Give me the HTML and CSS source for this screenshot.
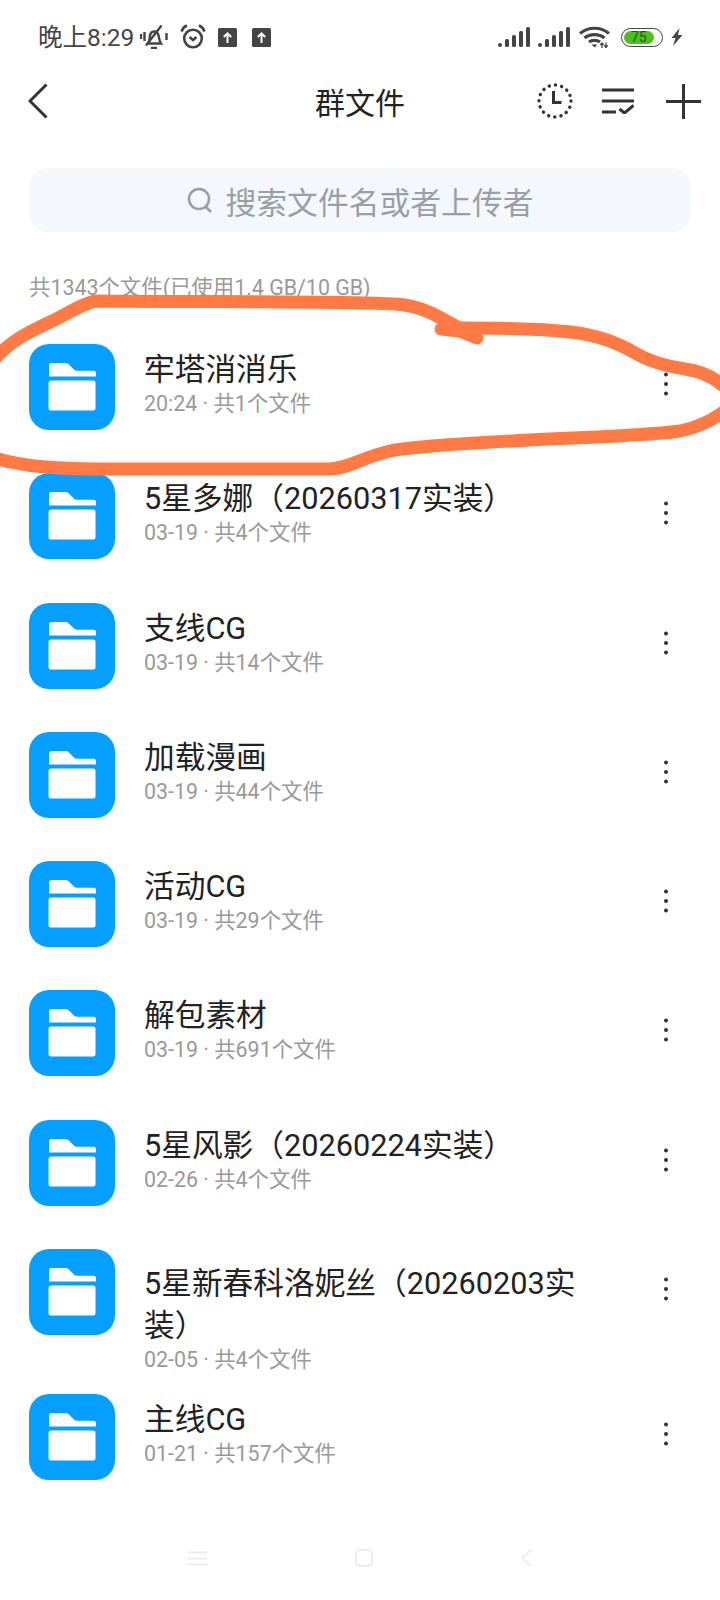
FILE: index.html
```html
<!DOCTYPE html>
<html lang="zh-CN">
<head>
<meta charset="utf-8">
<title>群文件</title>
<link rel="stylesheet" href="styles.css">
</head>
<body>
<svg class="defs" width="0" height="0" aria-hidden="true">
  <symbol id="folder" viewBox="0 0 86 86">
    <rect width="86" height="86" rx="20" fill="#05a0ff"/>
    <path d="M22 19h14.500q2 0 3.400 1.400l5 5q1.400 1.400 3.400 1.400h16.200a2.500 2.500 0 0 1 2.500 2.500v3.200h-47v-11a2.500 2.500 0 0 1 2.500-2.500z" fill="#fff"/>
    <rect x="19.500" y="36.500" width="47" height="30" rx="2.500" fill="#fff"/>
  </symbol>
  <symbol id="dots" viewBox="0 0 8 28">
    <circle cx="4" cy="4.500" r="2" fill="#333"/>
    <circle cx="4" cy="14" r="2" fill="#333"/>
    <circle cx="4" cy="23.500" r="2" fill="#333"/>
  </symbol>
  <symbol id="up" viewBox="0 0 19 19">
    <rect width="19" height="19" rx="1.500" fill="#444"/>
    <path d="M9.500 15V5.500M5.800 9l3.700-3.700L13.200 9" fill="none" stroke="#fff" stroke-width="2"/>
  </symbol>
  <symbol id="signal" viewBox="0 0 32 20">
    <rect x="0" y="16" width="4" height="4" rx="2" fill="#444"/>
    <rect x="7" y="12" width="4" height="8" rx="1.500" fill="#444"/>
    <rect x="14" y="8" width="4" height="12" rx="1.500" fill="#444"/>
    <rect x="21" y="4" width="4" height="16" rx="1.500" fill="#444"/>
    <rect x="28" y="0" width="4" height="20" rx="1.500" fill="#444"/>
  </symbol>
</svg>

<div class="page">
  <div class="status">
    <span class="time">晚上8:29</span>
    <svg class="st-bell" viewBox="0 0 28 24" fill="none" stroke="#444" stroke-width="2.400">
      <path d="M8 18.500c1.500-2 1.500-4 1.800-7 .4-3 2.200-5 4.200-5s4.200 1.800 4.800 5c.5 3 .7 5 2.200 7z"/>
      <path d="M6 20.500L21.500 .5"/>
      <path d="M11 23h6"/>
      <path d="M1 9v5M4.500 7v9M26.500 8v7"/>
    </svg>
    <svg class="st-alarm" viewBox="0 0 26 25" fill="none" stroke="#444" stroke-width="2.600">
      <circle cx="13" cy="14.500" r="8.800"/>
      <path d="M9.500 13l3.500 3 3.500-3"/>
      <path d="M1.500 7.500Q3 3 7 1.500M24.500 7.500Q23 3 19 1.500"/>
    </svg>
    <svg class="st-up"><use href="#up"/></svg>
    <svg class="st-up st-up-2"><use href="#up"/></svg>
    <span class="status-gap"></span>
    <svg class="st-signal"><use href="#signal"/></svg>
    <svg class="st-signal st-signal-2"><use href="#signal"/></svg>
    <svg class="st-wifi" viewBox="0 0 31 22" fill="none" stroke="#444" stroke-width="3.200">
      <path d="M1 7.500C9 .5 22 .5 30 7.500"/>
      <path d="M5.500 12c5.500-4.500 14.500-4.500 20 0"/>
      <path d="M10 16c3-2.300 8-2.300 11 0"/>
      <path d="M12.500 18.500l3 3 3-3z" fill="#444" stroke="none"/>
      <path d="M23 22v-5M21.300 19l1.700-2 1.700 2M27 16.500v5M25.300 19.500l1.700 2 1.700-2" stroke-width="1.300"/>
    </svg>
    <span class="battery"><span class="battery-fill"></span><span class="battery-num">75</span></span>
    <svg class="st-bolt" viewBox="0 0 12 18"><path d="M8.500 0L.5 10h4l-2.500 8 9.500-11H7z" fill="#444"/></svg>
  </div>

  <header class="bar">
    <svg class="back" viewBox="0 0 20 36" fill="none" stroke="#333" stroke-width="3"><path d="M18.500 1.500L2 18l16.500 16.500"/></svg>
    <h1 class="bar-title">群文件</h1>
    <div class="bar-actions">
      <svg class="act-clock" viewBox="0 0 36 36" fill="none" stroke="#333">
        <circle cx="18" cy="18" r="16" stroke-width="3.400" stroke-linecap="round" stroke-dasharray="0.100 6.180"/>
        <path d="M16.500 8v11.500h8" stroke-width="3"/>
      </svg>
      <svg class="act-sort" viewBox="0 0 32 26" fill="none" stroke="#333" stroke-width="3">
        <path d="M0 2h32M0 13h32M0 24h14"/>
        <path d="M17.500 21l5 4 9-7.500"/>
      </svg>
      <svg class="act-plus" viewBox="0 0 35 35" fill="none" stroke="#333" stroke-width="3"><path d="M17.500 0v35M0 17.500h35"/></svg>
    </div>
  </header>

  <div class="search">
    <svg class="search-icon" viewBox="0 0 26 26" fill="none" stroke="#9a9ea5" stroke-width="2.600"><circle cx="12" cy="12" r="10"/><path d="M18.500 19.500l5.500 5.500"/></svg>
    <span class="search-text">搜索文件名或者上传者</span>
  </div>

  <p class="summary">共1343个文件(已使用1.4 GB/10 GB)</p>

  <ul class="list">
    <li class="row"><svg class="folder"><use href="#folder"/></svg><div class="info"><div class="name">牢塔消消乐</div><div class="meta">20:24 · 共1个文件</div></div><svg class="more"><use href="#dots"/></svg></li>
    <li class="row"><svg class="folder"><use href="#folder"/></svg><div class="info"><div class="name">5星多娜（20260317实装）</div><div class="meta">03-19 · 共4个文件</div></div><svg class="more"><use href="#dots"/></svg></li>
    <li class="row"><svg class="folder"><use href="#folder"/></svg><div class="info"><div class="name">支线CG</div><div class="meta">03-19 · 共14个文件</div></div><svg class="more"><use href="#dots"/></svg></li>
    <li class="row"><svg class="folder"><use href="#folder"/></svg><div class="info"><div class="name">加载漫画</div><div class="meta">03-19 · 共44个文件</div></div><svg class="more"><use href="#dots"/></svg></li>
    <li class="row"><svg class="folder"><use href="#folder"/></svg><div class="info"><div class="name">活动CG</div><div class="meta">03-19 · 共29个文件</div></div><svg class="more"><use href="#dots"/></svg></li>
    <li class="row"><svg class="folder"><use href="#folder"/></svg><div class="info"><div class="name">解包素材</div><div class="meta">03-19 · 共691个文件</div></div><svg class="more"><use href="#dots"/></svg></li>
    <li class="row"><svg class="folder"><use href="#folder"/></svg><div class="info"><div class="name">5星风影（20260224实装）</div><div class="meta">02-26 · 共4个文件</div></div><svg class="more"><use href="#dots"/></svg></li>
    <li class="row row-tall"><svg class="folder"><use href="#folder"/></svg><div class="info"><div class="name">5星新春科洛妮丝（20260203实装）</div><div class="meta">02-05 · 共4个文件</div></div><svg class="more"><use href="#dots"/></svg></li>
    <li class="row"><svg class="folder"><use href="#folder"/></svg><div class="info"><div class="name">主线CG</div><div class="meta">01-21 · 共157个文件</div></div><svg class="more"><use href="#dots"/></svg></li>
  </ul>

  <nav class="nav">
    <svg class="nav-menu" viewBox="0 0 19 15" fill="none" stroke="#ececec" stroke-width="1.800"><path d="M0 1.500h19M0 7.500h19M0 13.500h19"/></svg>
    <svg class="nav-home" viewBox="0 0 18 18" fill="none" stroke="#ececec" stroke-width="1.800"><rect x="1" y="1" width="16" height="16" rx="4"/></svg>
    <svg class="nav-back" viewBox="0 0 12 18" fill="none" stroke="#ececec" stroke-width="1.800"><path d="M11 1L2 9l9 8"/></svg>
  </nav>

  <svg class="scribble" viewBox="0 0 720 1600" fill="none" stroke="#ff7a45" stroke-width="13" stroke-linecap="round" stroke-linejoin="round" aria-hidden="true">
    <path d="M-8 457C20 467 60 469 110 469L330 469C350 468 360 458 390 451C420 445 500 441 597 437C630 435 660 434 680 431C700 427 712 420 722 413"/>
    <path d="M722 385C712 376 700 371 685 369C665 366 650 362 635 353C615 341 590 333 560 331C530 328 490 328 459 328"/>
    <path d="M441 329L459 331L477 338"/>
    <path d="M459 328C440 318 425 306 395 304C350 301 200 302 96 301C85 303 75 309 60 317C40 328 15 335 -6 360"/>
  </svg>
</div>
</body>
</html>
```

FILE: styles.css
```css
* { box-sizing: border-box; }
html, body { margin: 0; padding: 0; background: #fff; }
body { font-family: Roboto, "Noto Sans CJK SC", sans-serif; }
.defs { position: absolute; }
svg { display: block; flex: none; }

.page { position: relative; width: 720px; height: 1600px; overflow: hidden; display: flex; flex-direction: column; }
.page > * { flex-shrink: 0; }

.status { height: 74px; padding: 0 37px 0 38px; display: flex; align-items: center; color: #444; }
.time { font-size: 24.500px; width: 104px; white-space: nowrap; margin-bottom: 3px; }
.st-bell { width: 28px; height: 24px; margin-left: -2px; margin-bottom: 1px; }
.st-alarm { width: 26px; height: 25px; margin-left: 12px; margin-bottom: 2px; }
.st-up { width: 19px; height: 19px; margin-left: 12px; }
.st-up-2 { margin-left: 15px; }
.status-gap { flex: 1; }
.st-signal { width: 32px; height: 20px; }
.st-signal-2 { margin-left: 8px; }
.st-wifi { width: 31px; height: 22px; margin-left: 9px; }
.battery { position: relative; width: 42px; height: 19px; margin-left: 11px; border: 1.500px solid #444; border-radius: 10px; padding: 2px; display: block; }
.battery-fill { display: block; width: 82%; height: 100%; background: #4fbf1f; border-radius: 7px; }
.battery-num { position: absolute; left: 9px; top: 0; font-size: 14px; line-height: 16px; color: #175f00; }
.st-bolt { width: 12px; height: 18px; margin-left: 8px; }

.bar { height: 54px; padding: 0 19px 0 28px; display: flex; align-items: center; position: relative; }
.back { width: 20px; height: 36px; }
.bar-title { position: absolute; left: 0; right: 0; margin: 0; text-align: center; font-size: 30px; font-weight: 400; color: #222; }
.bar-actions { margin-left: auto; display: flex; align-items: center; position: relative; }
.act-clock { width: 36px; height: 36px; }
.act-sort { width: 32px; height: 26px; margin-left: 29px; }
.act-plus { width: 35px; height: 35px; margin-left: 32px; }

.search { margin: 40px 29px 0; height: 64px; border-radius: 20px; background: #f4f8fd; display: flex; align-items: center; justify-content: center; gap: 13px; }
.search-icon { width: 26px; height: 26px; }
.search-text { font-size: 30.800px; color: #9a9ea5; }

.summary { margin: 41px 0 0 29px; font-size: 21.400px; line-height: 30px; color: #999; }

.list { list-style: none; margin: 41px 0 0; padding: 0; }
.row { display: flex; align-items: flex-start; min-height: 129.300px; padding-left: 29px; }
.row-tall { min-height: 145px; }
.folder { width: 86px; height: 86px; }
.info { width: 456px; margin-left: 29px; padding-top: 5px; }
.row-tall .info { padding-top: 14px; }
.name { font-size: 30.700px; line-height: 42px; color: #222; }
.meta { font-size: 21.400px; line-height: 28px; margin-top: -1px; color: #999; }
.more { width: 8px; height: 28px; margin: 26px 0 0 62px; }

.nav { margin-top: auto; margin-bottom: 7px; height: 70px; position: relative; display: flex; align-items: center; padding: 0 188px; justify-content: space-between; }
.nav-menu { width: 19px; height: 15px; }
.nav-home { width: 18px; height: 18px; }
.nav-back { width: 12px; height: 18px; }

.scribble { position: absolute; left: 0; top: 0; width: 720px; height: 1600px; pointer-events: none; }
```
